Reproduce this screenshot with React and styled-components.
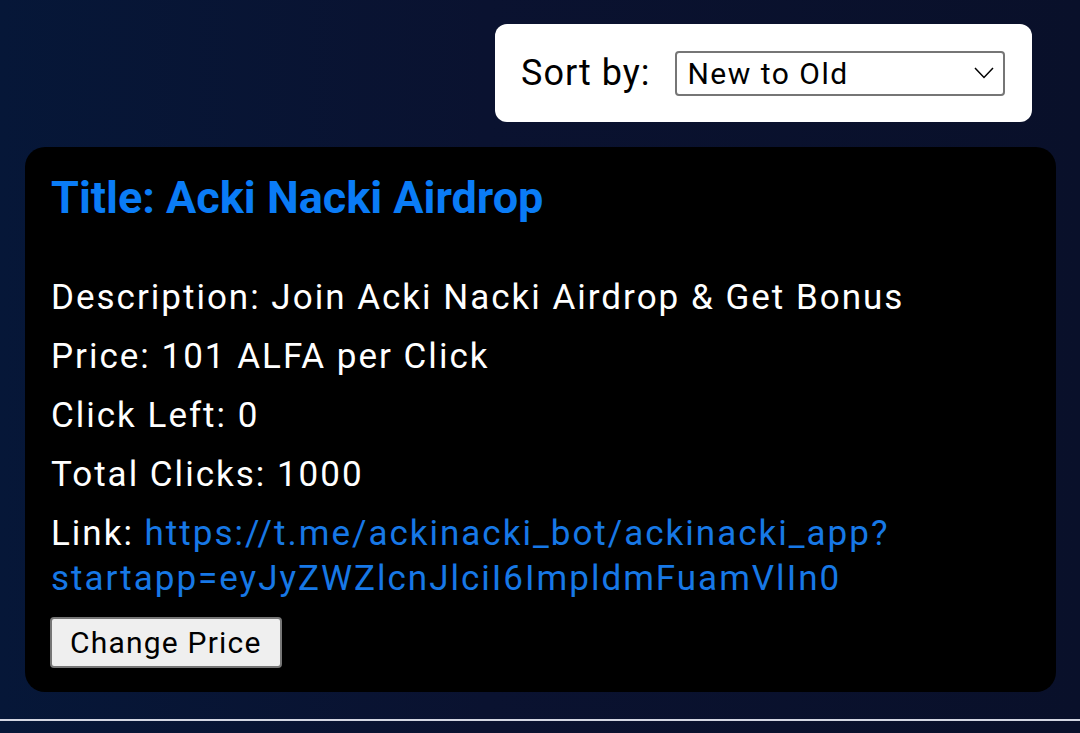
import React, { useState } from "react";
import styled, { createGlobalStyle } from "styled-components";

const GlobalStyle = createGlobalStyle`
  html, body {
    margin: 0;
    padding: 0;
  }
  body {
    min-height: 100vh;
    background: linear-gradient(to right, #061738 0%, #0a1230 45%, #09102a 100%);
    font-family: Roboto, "Noto Sans", Arial, sans-serif;
  }
`;

const Page = styled.div`
  display: flex;
  flex-direction: column;
  padding-top: 24px;
`;

const SortBar = styled.div`
  display: flex;
  justify-content: flex-end;
  padding-right: 48px;
`;

const SortBox = styled.div`
  display: flex;
  align-items: center;
  gap: 25px;
  width: 537px;
  height: 98px;
  box-sizing: border-box;
  padding: 0 25px 0 26px;
  background: #fff;
  border-radius: 12px;
`;

const SortLabel = styled.label`
  flex-shrink: 0;
  white-space: nowrap;
  font-size: 36px;
  letter-spacing: 1px;
  color: #000;
`;

const SelectWrap = styled.div`
  position: relative;
  display: flex;
  flex-shrink: 0;
`;

const Select = styled.select`
  appearance: none;
  -webkit-appearance: none;
  width: 330px;
  height: 45px;
  box-sizing: border-box;
  padding: 0 40px 0 10px;
  border: 2px solid #767676;
  border-radius: 4px;
  background: #fff;
  color: #000;
  font-family: Roboto, "Noto Sans", Arial, sans-serif;
  font-size: 30px;
  letter-spacing: 1.5px;
  outline: none;
`;

const Chevron = styled.svg`
  position: absolute;
  right: 11px;
  top: 50%;
  transform: translateY(-50%);
  pointer-events: none;
`;

const Card = styled.div`
  margin: 25px 24px 0 25px;
  padding: 24px 26px 24px 26px;
  background: #000;
  border-radius: 20px;
  display: flex;
  flex-direction: column;
  align-items: flex-start;
`;

const Title = styled.h2`
  margin: 0 0 51px;
  font-size: 45px;
  font-weight: 700;
  color: #0a7cf6;
`;

const Info = styled.div`
  display: flex;
  flex-direction: column;
  gap: 14px;
`;

const Line = styled.p`
  margin: 0;
  font-size: 35px;
  line-height: 45px;
  letter-spacing: 2px;
  color: #fff;
`;

const Link = styled.a`
  color: #1778e6;
  text-decoration: none;
`;

const Button = styled.button`
  margin-top: 16px;
  margin-left: -1px;
  height: 51px;
  padding: 0 18px;
  border: 2px solid #767676;
  border-radius: 4px;
  background: #efefef;
  color: #000;
  font-family: Roboto, "Noto Sans", Arial, sans-serif;
  font-size: 30px;
  letter-spacing: 1.2px;
  cursor: pointer;
`;

const Divider = styled.div`
  margin-top: 27px;
  height: 2px;
  background: #d3d6e2;
`;

const ad = {
  title: "Acki Nacki Airdrop",
  description: "Join Acki Nacki Airdrop & Get Bonus",
  price: 101,
  clicksLeft: 0,
  totalClicks: 1000,
  link: "https://t.me/ackinacki_bot/ackinacki_app?startapp=eyJyZWZlcnJlciI6ImpldmFuamVlIn0",
};

export default function App() {
  const [sort, setSort] = useState("new");

  return (
    <>
      <GlobalStyle />
      <Page>
        <SortBar>
          <SortBox>
            <SortLabel htmlFor="sort">Sort by:</SortLabel>
            <SelectWrap>
              <Select id="sort" value={sort} onChange={(e) => setSort(e.target.value)}>
                <option value="new">New to Old</option>
                <option value="old">Old to New</option>
              </Select>
              <Chevron width="20" height="12" viewBox="0 0 20 12" fill="none">
                <path d="M1 1 L10 10.5 L19 1" stroke="#000" strokeWidth="1.5" />
              </Chevron>
            </SelectWrap>
          </SortBox>
        </SortBar>

        <Card>
          <Title>Title: {ad.title}</Title>
          <Info>
            <Line>Description: {ad.description}</Line>
            <Line>Price: {ad.price} ALFA per Click</Line>
            <Line>Click Left: {ad.clicksLeft}</Line>
            <Line>Total Clicks: {ad.totalClicks}</Line>
            <Line>
              Link:{" "}
              <Link href={ad.link}>
                https://t.me/ackinacki_bot/ackinacki_app?
                <wbr />
                startapp=eyJyZWZlcnJlciI6ImpldmFuamVlIn0
              </Link>
            </Line>
          </Info>
          <Button>Change Price</Button>
        </Card>

        <Divider />
      </Page>
    </>
  );
}
